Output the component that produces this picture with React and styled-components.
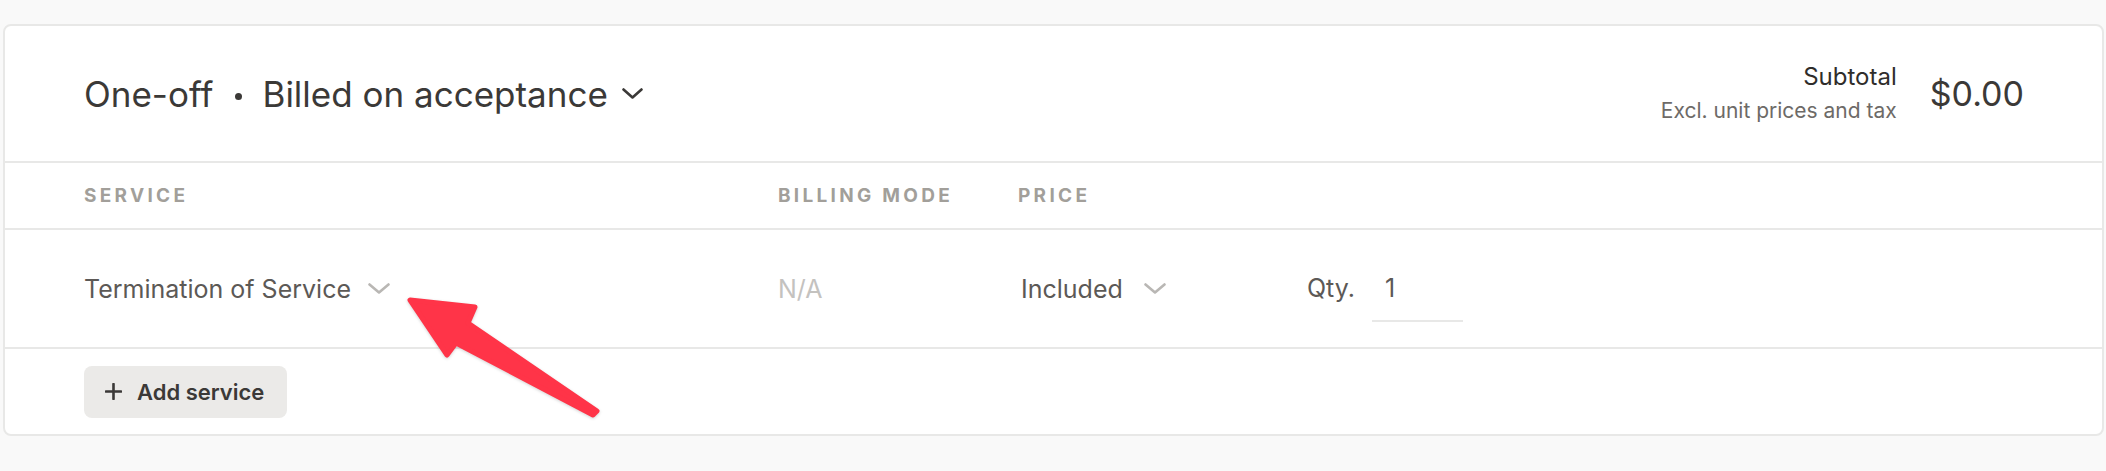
import React from "react";
import styled, { createGlobalStyle } from "styled-components";

const GlobalStyle = createGlobalStyle`
  body {
    margin: 0;
    background: #f9f9f9;
    font-family: Inter, "Noto Sans", sans-serif;
    -webkit-font-smoothing: antialiased;
  }
`;

const Page = styled.div`
  padding: 24px 2px 0 3px;
`;

const Card = styled.div`
  position: relative;
  background: #fff;
  border: 2px solid #e8e8e7;
  border-radius: 8px;
`;

const Header = styled.div`
  display: flex;
  align-items: center;
  justify-content: space-between;
  height: 135px;
  padding: 0 78px 0 79px;
  border-bottom: 2px solid #e8e8e7;
`;

const Title = styled.div`
  display: flex;
  align-items: baseline;
  font-size: 35px;
  color: #3b3937;
  line-height: 40px;
`;

const Dot = styled.span`
  align-self: center;
  width: 7px;
  height: 7px;
  border-radius: 50%;
  background: #3b3937;
  margin: 5px 20px 0 22px;
`;

const Chevron = styled.svg`
  margin-left: ${p => p.gap}px;
  flex-shrink: 0;
  align-self: center;
`;

const Totals = styled.div`
  display: flex;
  align-items: center;
`;

const SubtotalText = styled.div`
  text-align: right;
`;

const SubtotalLabel = styled.div`
  font-size: 24px;
  font-weight: 400;
  line-height: 32px;
  color: #2f2d2b;
`;

const SubtotalNote = styled.div`
  font-size: 21px;
  line-height: 32px;
  margin-top: 2px;
  color: #6d6a67;
`;

const Amount = styled.div`
  font-size: 34px;
  color: #3b3937;
  margin-left: 33px;
`;

const Grid = styled.div`
  display: grid;
  grid-template-columns: 694px 240px 289px 1fr;
  align-items: center;
  height: ${p => p.h}px;
  padding-left: 79px;
  border-bottom: 2px solid #e8e8e7;
`;

const ColHead = styled.div`
  font-size: 19px;
  font-weight: 700;
  letter-spacing: 3.3px;
  color: #a29f9a;
  text-transform: uppercase;
`;

const Cell = styled.div`
  display: flex;
  align-items: center;
  padding-left: ${p => p.inset || 0}px;
  font-size: 25px;
  color: ${p => (p.muted ? "#c4c2bf" : "#5c5956")};
`;

const QtyCell = styled.div`
  display: flex;
  align-items: baseline;
  font-size: 25px;
  color: #5c5956;
`;

const QtyInput = styled.input`
  width: 91px;
  box-sizing: border-box;
  margin-left: 17px;
  padding: 17px 0 17px 13px;
  border: none;
  border-bottom: 2px solid #e8e8e7;
  font: inherit;
  line-height: 30px;
  color: #5c5956;
  background: transparent;
  outline: none;
`;

const Footer = styled.div`
  display: flex;
  align-items: center;
  height: 85px;
  padding-left: 79px;
`;

const AddButton = styled.button`
  display: inline-flex;
  align-items: center;
  gap: 15px;
  height: 52px;
  padding: 0 23px 0 21px;
  border: none;
  border-radius: 8px;
  background: #ebeae8;
  font-family: inherit;
  font-size: 22px;
  font-weight: 600;
  color: #3b3937;
`;

const Arrow = styled.svg`
  position: absolute;
  left: 395px;
  top: 264px;
  overflow: visible;
  filter: drop-shadow(0 1px 1.5px rgba(0, 0, 0, 0.18));
`;

const Down = ({ w, h, color, gap }) => (
  <Chevron gap={gap} width={w} height={h} viewBox={`0 0 ${w} ${h}`}>
    <path
      d={`M1.5 1.5 L${w / 2} ${h - 1.5} L${w - 1.5} 1.5`}
      fill="none"
      stroke={color}
      strokeWidth="2.6"
      strokeLinecap="round"
      strokeLinejoin="round"
    />
  </Chevron>
);

const Plus = () => (
  <svg width="17" height="17" viewBox="0 0 17 17">
    <path d="M8.5 1 V16 M1 8.5 H16" stroke="#3b3937" strokeWidth="2.6" strokeLinecap="round" />
  </svg>
);

export default function App() {
  return (
    <>
      <GlobalStyle />
      <Page>
        <Card>
          <Header>
            <Title>
              One-off
              <Dot />
              Billed on acceptance
              <Down w={21} h={11} color="#3b3937" gap={14} />
            </Title>
            <Totals>
              <SubtotalText>
                <SubtotalLabel>Subtotal</SubtotalLabel>
                <SubtotalNote>Excl. unit prices and tax</SubtotalNote>
              </SubtotalText>
              <Amount>$0.00</Amount>
            </Totals>
          </Header>

          <Grid h={65}>
            <ColHead>Service</ColHead>
            <ColHead>Billing mode</ColHead>
            <ColHead>Price</ColHead>
            <div />
          </Grid>

          <Grid h={117}>
            <Cell>
              Termination of Service
              <Down w={22} h={11} color="#b9b7b4" gap={17} />
            </Cell>
            <Cell muted>N/A</Cell>
            <Cell inset={3}>
              Included
              <Down w={22} h={11} color="#b9b7b4" gap={21} />
            </Cell>
            <QtyCell>
              Qty.
              <QtyInput value="1" readOnly />
            </QtyCell>
          </Grid>

          <Footer>
            <AddButton>
              <Plus />
              Add service
            </AddButton>
          </Footer>

          <Arrow width="210" height="135" viewBox="400 290 210 135">
            <polygon
              points="410,300 475,307 468,323 597,411 593,415 456,343 447,355"
              fill="#ff3448"
              stroke="#ff3448"
              strokeWidth="5"
              strokeLinejoin="round"
            />
          </Arrow>
        </Card>
      </Page>
    </>
  );
}
